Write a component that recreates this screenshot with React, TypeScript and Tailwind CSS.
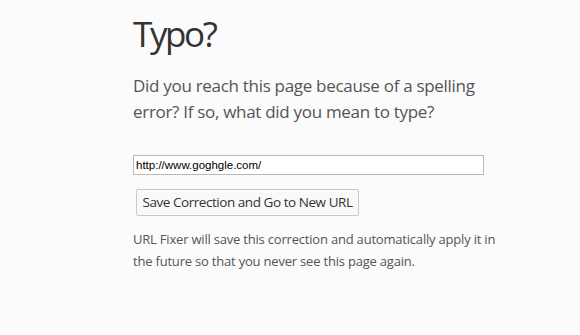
export default function App() {
  return (
    <div className="min-h-[335px] w-[580px] bg-[#fbfbfb] pl-[133px] pt-[10px] text-[#444]" style={{ fontFamily: '"Open Sans", "Noto Sans", sans-serif' }}>
      <h1 className="text-[35px] leading-[48px] font-normal text-[#333] tracking-[-2.4px]">Typo?</h1>
      <p className="mt-[15px] text-[17px] leading-[26px] text-[#555] tracking-[-0.3px]">
        Did you reach this page because of a spelling
        <br />
        error? If so, what did you mean to type?
      </p>
      <div className="mt-[26px]">
        <input
          type="text"
          defaultValue="http://www.goghgle.com/"
          className="h-[20px] w-[351px] border border-[#b9b9b9] bg-white px-[2px] text-[11.5px] text-black outline-none"
          style={{ fontFamily: '"Liberation Sans", Arial, sans-serif' }}
        />
      </div>
      <button className="ml-[3px] mt-[14px] flex h-[27px] w-[223px] items-center justify-center whitespace-nowrap rounded-[2px] border border-[#c9c9c9] bg-[#f9f9f9] p-0 text-[13.5px] text-[#333] tracking-[-0.45px]">
        Save Correction and Go to New URL
      </button>
      <p className="mt-[12px] text-[13px] leading-[22px] text-[#555] tracking-[-0.2px]">
        URL Fixer will save this correction and automatically apply it in
        <br />
        the future so that you never see this page again.
      </p>
    </div>
  );
}
